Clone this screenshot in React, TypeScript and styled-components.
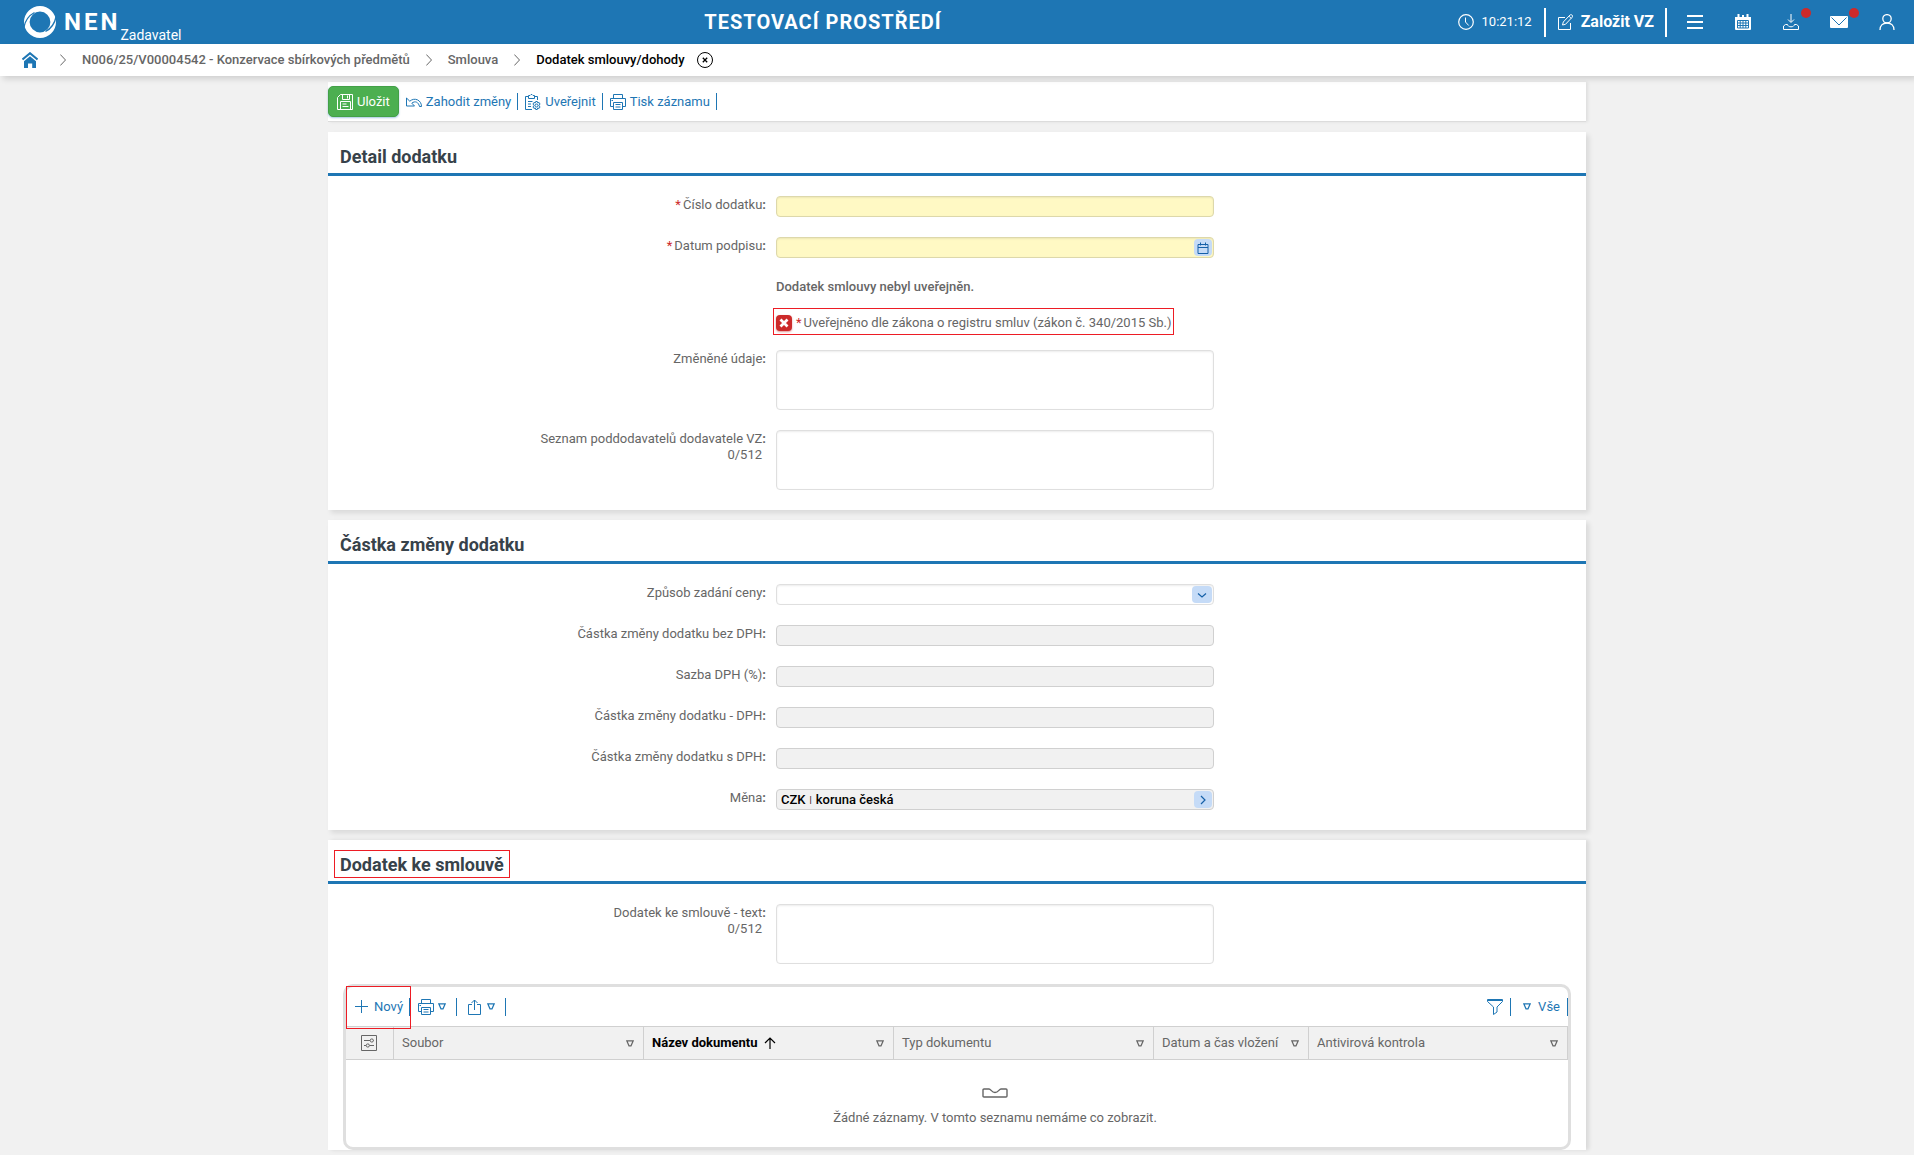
import React from "react";
import styled, { createGlobalStyle, css } from "styled-components";

const blue = "#1e76b4";
const grey = "#666666";
const line = "#d0d0d0";

const GlobalStyle = createGlobalStyle`
  *, *::before, *::after { box-sizing: border-box; }
  body {
    margin: 0;
    background: #f1f1f1;
    color: ${grey};
    font: 13px/16px Roboto, "Noto Sans", sans-serif;
  }
  button, input, select, textarea { font: inherit; color: inherit; }
  button { cursor: pointer; background: none; border: 0; padding: 0; }
  svg { display: block; flex: none; }
`;

/* ---------- icons ---------- */

type IconProps = { size?: number; stroke?: number; children: React.ReactNode };

const Icon = ({ size = 16, stroke = 1, children }: IconProps) => (
  <svg
    width={size}
    height={size}
    viewBox={`0 0 ${size} ${size}`}
    fill="none"
    stroke="currentColor"
    strokeWidth={stroke}
    aria-hidden="true"
  >
    {children}
  </svg>
);

const LogoIcon = () => (
  <svg width="34" height="34" viewBox="0 0 34 34" fill="none" aria-hidden="true">
    <circle cx="17" cy="17" r="13.200" stroke="#fff" strokeWidth="5.600" />
    <path d="M1 22Q3 12 11.500 7.500" stroke={blue} strokeWidth="1.300" />
    <path d="M33 12Q31 22 22.500 26.500" stroke={blue} strokeWidth="1.300" />
  </svg>
);

const ClockIcon = () => (
  <Icon>
    <circle cx="8" cy="8" r="7.300" strokeWidth="1.200" />
    <path d="M7.500 3.500V8l3.200 3.500" />
  </Icon>
);

const EditIcon = () => (
  <Icon>
    <path d="M8 3.500H1.500v12h12V9" />
    <path d="M5.500 11l.8-3L13 1c.6-.5 1.600-.4 2.200.2.500.6.500 1.500 0 2L8.500 10.300 5.500 11zM12 2.200l2.200 2.200" />
  </Icon>
);

const MenuIcon = () => (
  <Icon stroke={2}>
    <path d="M0 2h16M0 8h16M0 14h16" />
  </Icon>
);

const CalendarSolidIcon = () => (
  <Icon>
    <path d="M0 3h16v12a1 1 0 0 1-1 1H1a1 1 0 0 1-1-1z" fill="currentColor" stroke="none" />
    <path d="M3.500 0v4M8 1v3M12.500 0v4" strokeWidth="2" />
    <path d="M2.500 6.500h11v7.500h-11zM5.200 7v7M8 7v7M10.800 7v7M2.500 9h11M2.500 11.500h11" stroke={blue} />
  </Icon>
);

const DownloadIcon = () => (
  <Icon>
    <path d="M8 0v8M5 5.500l3 3 3-3" />
    <path d="M2.500 10.500h2c.3 1.500 1.500 2.300 3.500 2.300s3.200-.8 3.500-2.300h2l2 1.500v3.500H.5V12z" />
  </Icon>
);

const MailIcon = () => (
  <Icon size={18}>
    <rect x="0" y="3" width="18" height="12" rx="1" fill="currentColor" stroke="none" />
    <path d="M1.500 4.500L9 12l7.500-7.500" stroke={blue} />
  </Icon>
);

const UserIcon = () => (
  <Icon stroke={1.3}>
    <circle cx="8" cy="4.800" r="4.200" />
    <path d="M1 16c0-4.500 3-7 7-7s7 2.500 7 7" />
  </Icon>
);

const HomeIcon = () => (
  <Icon>
    <path d="M.5 7.500L8 1.200l7.500 6.300" strokeWidth="2" />
    <path d="M2 9.200l6-5 6 5V16h-3.800v-4.500H6V16H2z" fill="currentColor" stroke="none" />
  </Icon>
);

const CrumbArrow = () => (
  <svg width="6" height="12" viewBox="0 0 6 12" fill="none" stroke="#666" aria-hidden="true">
    <path d="M.3.5L5.500 6 .3 11.500" />
  </svg>
);

const CloseIcon = () => (
  <Icon>
    <circle cx="8" cy="8" r="7.500" />
    <path d="M5.800 5.800l4.400 4.400M10.200 5.800l-4.400 4.400" strokeWidth="1.300" />
  </Icon>
);

const SaveIcon = () => (
  <Icon>
    <path d="M3.500.5h12v15H.5v-12zM5.500.5v5h7v-5M10.500 1.500v3M3.500 15.500v-8h10v8M5.500 10h4M5.500 12.500h6" />
  </Icon>
);

const UndoIcon = () => (
  <Icon>
    <path d="M.5 4v8h8L5.800 9.200C9 6.500 12.500 8 13.500 12.500h2C15.500 6 8.500 3 3.800 7.200L.5 4z" />
  </Icon>
);

const PublishIcon = () => (
  <Icon>
    <path d="M4 2.500H.5v13H7M9.500 2.500h3V6M3.500 4.500v-3H5l1-1h1l1 1h1.500v3zM3 7.500h4.500M3 10h3M3 12.500h3" />
    <circle cx="11.500" cy="11.500" r="1.500" />
    <path d="M10.700 7.500h1.600l.4 1.400 1.400-.4.900 1.500-1 1.500 1 1.500-.9 1.400-1.400-.4-.4 1.500h-1.600l-.4-1.500-1.400.4-.9-1.400 1-1.500-1-1.500.9-1.500 1.400.4z" />
  </Icon>
);

const PrinterIcon = () => (
  <Icon>
    <path d="M3.500 4.500v-4h9v4M3.500 12.500h-3v-8h15v8h-3M3.500 8.500h9v7h-9zM5.500 10.500h5M5.500 13h5M1.500 6.500h1.500" />
  </Icon>
);

const PlusIcon = () => (
  <Icon size={13}>
    <path d="M6.500 0v13M0 6.500h13" />
  </Icon>
);

const ShareIcon = () => (
  <Icon>
    <path d="M5 5.500H1.500v10h12v-10H10M7.500 11V1M4.500 4l3-3 3 3" />
  </Icon>
);

const FunnelIcon = () => (
  <Icon>
    <path d="M.5.500h15v2L10 8v5l-3.500 2.500V8L.5 2.500zM.5 1.500h15" />
  </Icon>
);

const TriangleIcon = () => (
  <svg width="8" height="7" viewBox="0 0 8 7" fill="none" stroke="currentColor" aria-hidden="true">
    <path d="M.8.8h6.400L5 5.800H3z" strokeWidth="1.200" />
  </svg>
);

const SortUpIcon = () => (
  <Icon size={12}>
    <path d="M6 12V1M1 6l5-5 5 5" strokeWidth="1.200" />
  </Icon>
);

const ColumnsIcon = () => (
  <Icon>
    <path d="M.5.500h15v15H.5zM3 5.500h6M12.500 5.500H13M3 10.500h2M8.500 10.500H13" />
    <circle cx="10.800" cy="5.500" r="1.600" />
    <circle cx="6.800" cy="10.500" r="1.600" />
  </Icon>
);

const EmptyTrayIcon = () => (
  <svg width="26" height="10" viewBox="0 0 26 10" fill="none" stroke="currentColor" aria-hidden="true">
    <path
      d="M2 1h5c2 0 2.500 3.500 6 3.500S17 1 19 1h5q1 0 1 1v6q0 1-1 1H2q-1 0-1-1V2q0-1 1-1z"
      strokeWidth="1.400"
    />
  </svg>
);

const FieldCalendarIcon = () => (
  <Icon size={12}>
    <path d="M1 2.500h10v9H1zM1 5.500h10M3.500.5v3M8.500.5v3" />
  </Icon>
);

const ChevronDown = () => (
  <Icon size={10}>
    <path d="M1 3.500l4 3.500 4-3.500" strokeWidth="1.200" />
  </Icon>
);

const ChevronRight = () => (
  <Icon size={10}>
    <path d="M3 1l4 4-4 4" strokeWidth="1.200" />
  </Icon>
);

/* ---------- page head ---------- */

const TopBar = styled.header`
  display: grid;
  grid-template-columns: 1fr auto 1fr;
  align-items: center;
  height: 44px;
  padding: 0 3px 0 23px;
  background: ${blue};
  color: #fff;
`;

const Brand = styled.a`
  display: flex;
  align-items: center;
  gap: 7px;
  height: 44px;
  color: inherit;
  text-decoration: none;
`;

const BrandName = styled.span`
  font-size: 24px;
  line-height: 28px;
  font-weight: 700;
  letter-spacing: 3px;
`;

const BrandRole = styled.span`
  align-self: flex-end;
  margin-left: -7px;
  padding-bottom: 1px;
  font-size: 14px;
`;

const Environment = styled.div`
  font-size: 20px;
  line-height: 24px;
  font-weight: 700;
  letter-spacing: 1px;
  padding-right: 288px;
`;

const TopTools = styled.div`
  display: flex;
  align-items: center;
  justify-content: flex-end;
`;

const Clock = styled.time`
  display: flex;
  align-items: center;
  gap: 8px;
  padding-right: 12px;
`;

const CreateButton = styled.button`
  display: flex;
  align-items: center;
  gap: 8px;
  height: 29px;
  margin-right: 4px;
  padding: 0 11px;
  border: solid #fff;
  border-width: 0 2px;
  font-size: 16px;
  font-weight: 700;
  white-space: nowrap;
`;

const TopButton = styled.button<{ $alert?: boolean }>`
  position: relative;
  display: grid;
  place-items: center;
  width: 48px;
  height: 44px;
  ${(p) =>
    p.$alert &&
    css`
      &::after {
        content: "";
        position: absolute;
        top: 8px;
        right: 4px;
        width: 10px;
        height: 10px;
        border-radius: 50%;
        background: #cc2a2a;
      }
    `}
`;

const Breadcrumbs = styled.nav`
  position: relative;
  display: flex;
  align-items: center;
  gap: 16px;
  height: 32px;
  padding: 0 22px;
  background: #fff;
  box-shadow: 3px 3px 6px rgba(0, 0, 0, 0.14);
`;

const HomeLink = styled.a`
  color: ${blue};
  padding-right: 6px;
`;

const Crumb = styled.a<{ $current?: boolean }>`
  color: ${(p) => (p.$current ? "#000" : grey)};
  font-weight: 500;
  text-decoration: none;
`;

const CloseButton = styled.button`
  margin-left: -4px;
  color: #000;
`;

/* ---------- layout ---------- */

const Main = styled.main`
  display: grid;
  grid-template-columns: minmax(0, 1fr);
  gap: 10px;
  max-width: 1258px;
  margin: 0 auto;
  padding: 6px 0 5px;
`;

const ActionBar = styled.div`
  display: flex;
  align-items: center;
  height: 40px;
  background: #fff;
  border-bottom: 1px solid #dcdcdc;
  box-shadow: 2px 0 3px rgba(0, 0, 0, 0.08);
`;

const SaveButton = styled.button`
  display: flex;
  align-items: center;
  gap: 4px;
  height: 31px;
  padding: 0 8px;
  border: 1px solid #43a047;
  border-radius: 5px;
  background: #4caf50;
  color: #fff;
  box-shadow: 0 1px 2px rgba(30, 118, 180, 0.4);
`;

const LinkButton = styled.button`
  display: flex;
  align-items: center;
  gap: 4px;
  height: 17px;
  padding: 0 6px 0 7px;
  border-right: 1px solid ${blue};
  color: ${blue};
`;

const Card = styled.section<{ $last?: boolean }>`
  background: #fff;
  box-shadow: ${(p) => (p.$last ? "3px 0 4px" : "3px 3px 5px")} rgba(0, 0, 0, 0.1);
`;

const CardHead = styled.div`
  display: flex;
  height: 44px;
  padding: 13px 12px 4px;
  border-bottom: 3px solid ${blue};
`;

const CardTitle = styled.h2`
  position: relative;
  margin: 0;
  font-size: 18px;
  line-height: 24px;
  font-weight: 700;
  color: #37424a;
`;

const Highlight = styled.span<{ $inset: string }>`
  position: absolute;
  inset: ${(p) => p.$inset};
  border: 1px solid #ed1c24;
  pointer-events: none;
`;

const Fields = styled.div`
  display: grid;
  gap: 20px;
  padding: 20px 0;
`;

const Row = styled.div`
  display: grid;
  grid-template-columns: 438px minmax(0, 438px);
  column-gap: 10px;
`;

const Label = styled.label`
  padding-top: 1px;
  text-align: right;
`;

const Colon = styled.span`
  font-weight: 700;
`;

const Counter = styled.span`
  display: block;
  padding-right: 4px;
`;

const Star = styled.span`
  color: #cc2a2a;
  margin-right: 2px;
`;

const Control = styled.div`
  position: relative;
  display: grid;
`;

const box = css`
  width: 100%;
  margin: 0;
  padding: 0 4px;
  border: 1px solid #dfdfdf;
  border-radius: 4px;
  background: #fff;
  box-shadow: inset 0 1px 2px rgba(0, 0, 0, 0.08);
  outline: none;
`;

const TextBox = styled.input<{ $required?: boolean }>`
  ${box}
  height: 21px;
  ${(p) =>
    p.$required &&
    css`
      background: #fff9c4;
      border-color: #ddd8ab;
    `}
  &:disabled {
    background: #f1f1f1;
    border-color: ${line};
    box-shadow: none;
  }
`;

const SelectBox = styled.select`
  ${box}
  height: 21px;
  appearance: none;
`;

const TextArea = styled.textarea`
  ${box}
  height: 60px;
  resize: none;
`;

const LookupValue = styled.output`
  ${box}
  display: flex;
  align-items: center;
  gap: 4px;
  height: 21px;
  background: #f1f1f1;
  border-color: ${line};
  box-shadow: none;
  color: #000;
  font-weight: 500;
`;

const Bar = styled.span`
  font-size: 9px;
  font-weight: 400;
`;

const badge = css<{ $wide?: boolean }>`
  position: absolute;
  top: 2px;
  right: 2px;
  display: grid;
  place-items: center;
  width: ${(p) => (p.$wide ? 20 : 18)}px;
  height: 17px;
  border-radius: 4px;
  background: #c5dbf7;
  color: #1560a8;
`;

const BadgeButton = styled.button`
  ${badge}
`;

const BadgeMark = styled.span<{ $wide?: boolean }>`
  ${badge}
  pointer-events: none;
`;

const Notice = styled.p`
  grid-column: 2;
  margin: 0;
  line-height: 18px;
  font-weight: 500;
`;

const CheckRow = styled.div`
  grid-column: 2;
  justify-self: start;
  position: relative;
  display: flex;
  align-items: center;
  gap: 4px;
  height: 14px;
  white-space: nowrap;
`;

const CheckWrap = styled.span`
  position: relative;
  display: block;
  width: 16px;
  height: 16px;
  color: #fff;
  svg {
    position: absolute;
    inset: 0;
    pointer-events: none;
  }
`;

const CheckBox = styled.input`
  display: block;
  appearance: none;
  width: 16px;
  height: 16px;
  margin: 0;
  border-radius: 4px;
  background: #cc2a2a;
  box-shadow: 0 1px 2px rgba(204, 42, 42, 0.5);
`;

/* ---------- documents grid ---------- */

const GridFrame = styled.div`
  margin: 0 15px;
  border: 3px solid #dfdfdf;
  border-radius: 10px;
`;

const GridTools = styled.div`
  display: flex;
  align-items: center;
  height: 39px;
`;

const GridToolButton = styled.button<{ $gap?: number; $pad?: string }>`
  position: relative;
  display: flex;
  align-items: center;
  gap: ${(p) => p.$gap ?? 4}px;
  height: 18px;
  padding: ${(p) => p.$pad ?? "0 7px 0 8px"};
  border-right: 1px solid ${blue};
  color: ${blue};
`;

const Spacer = styled.span`
  flex: 1;
`;

const Table = styled.table`
  width: 100%;
  table-layout: fixed;
  border-collapse: separate;
  border-spacing: 0;
`;

const HeadCell = styled.th<{ $width?: number; $sorted?: boolean }>`
  width: ${(p) => (p.$width ? `${p.$width}px` : "auto")};
  height: 34px;
  padding: 0 9px 0 8px;
  border: solid ${line};
  border-width: 1px 1px 1px 0;
  background: #f1f1f1;
  text-align: left;
  font-weight: ${(p) => (p.$sorted ? 700 : 400)};
  color: ${(p) => (p.$sorted ? "#000" : grey)};
`;

const HeadInner = styled.span`
  display: flex;
  align-items: center;
  gap: 6px;
  white-space: nowrap;
`;

const FilterButton = styled.button`
  margin-left: auto;
  color: ${grey};
`;

const IconCellButton = styled.button`
  display: block;
  margin: 0 auto;
  color: ${grey};
`;

const EmptyCell = styled.td`
  height: 87px;
  padding: 6px 0 0 76px;
`;

const EmptyState = styled.div`
  display: grid;
  justify-items: center;
  gap: 12px;
`;

/* ---------- field helpers ---------- */

type FieldProps = {
  id: string;
  label: string;
  required?: boolean;
  counter?: string;
  children: React.ReactNode;
};

const Field = ({ id, label, required, counter, children }: FieldProps) => (
  <Row>
    <Label htmlFor={id}>
      {required && <Star>*</Star>}
      {label}
      <Colon>:</Colon>
      {counter && <Counter>{counter}</Counter>}
    </Label>
    <Control>{children}</Control>
  </Row>
);

const disabledFields = [
  ["bezdph", "Částka změny dodatku bez DPH"],
  ["sazba", "Sazba DPH (%)"],
  ["dph", "Částka změny dodatku - DPH"],
  ["sdph", "Částka změny dodatku s DPH"],
];

const columns = [
  { name: "Soubor", width: 250 },
  { name: "Název dokumentu", width: 250, sorted: true },
  { name: "Typ dokumentu", width: 260 },
  { name: "Datum a čas vložení", width: 155 },
  { name: "Antivirová kontrola" },
];

export default function App() {
  return (
    <>
      <GlobalStyle />
      <TopBar>
        <Brand href="#">
          <LogoIcon />
          <BrandName>NEN</BrandName>
          <BrandRole>Zadavatel</BrandRole>
        </Brand>
        <Environment>TESTOVACÍ PROSTŘEDÍ</Environment>
        <TopTools>
          <Clock>
            <ClockIcon />
            10:21:12
          </Clock>
          <CreateButton type="button">
            <EditIcon />
            Založit VZ
          </CreateButton>
          <TopButton type="button" aria-label="Menu"><MenuIcon /></TopButton>
          <TopButton type="button" aria-label="Kalendář"><CalendarSolidIcon /></TopButton>
          <TopButton type="button" aria-label="Stažené soubory" $alert><DownloadIcon /></TopButton>
          <TopButton type="button" aria-label="Zprávy" $alert><MailIcon /></TopButton>
          <TopButton type="button" aria-label="Uživatel"><UserIcon /></TopButton>
        </TopTools>
      </TopBar>

      <Breadcrumbs>
        <HomeLink href="#" aria-label="Domů"><HomeIcon /></HomeLink>
        <CrumbArrow />
        <Crumb href="#">N006/25/V00004542 - Konzervace sbírkových předmětů</Crumb>
        <CrumbArrow />
        <Crumb href="#">Smlouva</Crumb>
        <CrumbArrow />
        <Crumb href="#" $current>Dodatek smlouvy/dohody</Crumb>
        <CloseButton type="button" aria-label="Zavřít"><CloseIcon /></CloseButton>
      </Breadcrumbs>

      <Main>
        <ActionBar>
          <SaveButton type="button"><SaveIcon />Uložit</SaveButton>
          <LinkButton type="button"><UndoIcon />Zahodit změny</LinkButton>
          <LinkButton type="button"><PublishIcon />Uveřejnit</LinkButton>
          <LinkButton type="button"><PrinterIcon />Tisk záznamu</LinkButton>
        </ActionBar>

        <Card>
          <CardHead><CardTitle>Detail dodatku</CardTitle></CardHead>
          <Fields>
            <Field id="cislo" label="Číslo dodatku" required>
              <TextBox id="cislo" $required />
            </Field>
            <Field id="datum" label="Datum podpisu" required>
              <TextBox id="datum" $required />
              <BadgeButton type="button" aria-label="Vybrat datum"><FieldCalendarIcon /></BadgeButton>
            </Field>
            <Row><Notice>Dodatek smlouvy nebyl uveřejněn.</Notice></Row>
            <Row>
              <CheckRow>
                <CheckWrap>
                  <CheckBox type="checkbox" id="registr" />
                  <Icon><path d="M4.500 4.500l7 7M11.500 4.500l-7 7" strokeWidth="2.800" /></Icon>
                </CheckWrap>
                <label htmlFor="registr">
                  <Star>*</Star>
                  Uveřejněno dle zákona o registru smluv (zákon č. 340/2015 Sb.)
                </label>
                <Highlight $inset="-8px -3px -5px" />
              </CheckRow>
            </Row>
            <Field id="zmeny" label="Změněné údaje">
              <TextArea id="zmeny" />
            </Field>
            <Field id="seznam" label="Seznam poddodavatelů dodavatele VZ" counter="0/512">
              <TextArea id="seznam" />
            </Field>
          </Fields>
        </Card>

        <Card>
          <CardHead><CardTitle>Částka změny dodatku</CardTitle></CardHead>
          <Fields>
            <Field id="zpusob" label="Způsob zadání ceny">
              <SelectBox id="zpusob"><option value="" /></SelectBox>
              <BadgeMark $wide><ChevronDown /></BadgeMark>
            </Field>
            {disabledFields.map(([id, label]) => (
              <Field key={id} id={id} label={label}>
                <TextBox id={id} disabled />
              </Field>
            ))}
            <Field id="mena" label="Měna">
              <LookupValue id="mena">
                CZK<Bar>|</Bar>koruna česká
              </LookupValue>
              <BadgeButton type="button" aria-label="Detail měny"><ChevronRight /></BadgeButton>
            </Field>
          </Fields>
        </Card>

        <Card $last>
          <CardHead>
            <CardTitle>
              Dodatek ke smlouvě
              <Highlight $inset="-3px -6px -1px" />
            </CardTitle>
          </CardHead>
          <Fields>
            <Field id="text" label="Dodatek ke smlouvě - text" counter="0/512">
              <TextArea id="text" />
            </Field>
          </Fields>
          <GridFrame>
            <GridTools>
              <GridToolButton type="button" $gap={6} $pad="0 6px 0 9px">
                <PlusIcon />
                Nový
                <Highlight $inset="-12px -2px -13px 0" />
              </GridToolButton>
              <GridToolButton type="button" aria-label="Tisk" $pad="0 10px 0 8px">
                <PrinterIcon />
                <TriangleIcon />
              </GridToolButton>
              <GridToolButton type="button" aria-label="Export" $pad="0 10px">
                <ShareIcon />
                <TriangleIcon />
              </GridToolButton>
              <Spacer />
              <GridToolButton type="button" aria-label="Filtr"><FunnelIcon /></GridToolButton>
              <GridToolButton type="button" $gap={7} $pad="0 7px 0 12px">
                <TriangleIcon />
                Vše
              </GridToolButton>
            </GridTools>
            <Table>
              <thead>
                <tr>
                  <HeadCell $width={48} scope="col">
                    <IconCellButton type="button" aria-label="Nastavení sloupců"><ColumnsIcon /></IconCellButton>
                  </HeadCell>
                  {columns.map((c) => (
                    <HeadCell key={c.name} $width={c.width} $sorted={c.sorted} scope="col">
                      <HeadInner>
                        {c.name}
                        {c.sorted && <SortUpIcon />}
                        <FilterButton type="button" aria-label={`Filtr ${c.name}`}><TriangleIcon /></FilterButton>
                      </HeadInner>
                    </HeadCell>
                  ))}
                </tr>
              </thead>
              <tbody>
                <tr>
                  <EmptyCell colSpan={6}>
                    <EmptyState>
                      <EmptyTrayIcon />
                      <span>Žádné záznamy. V tomto seznamu nemáme co zobrazit.</span>
                    </EmptyState>
                  </EmptyCell>
                </tr>
              </tbody>
            </Table>
          </GridFrame>
        </Card>
      </Main>
    </>
  );
}
